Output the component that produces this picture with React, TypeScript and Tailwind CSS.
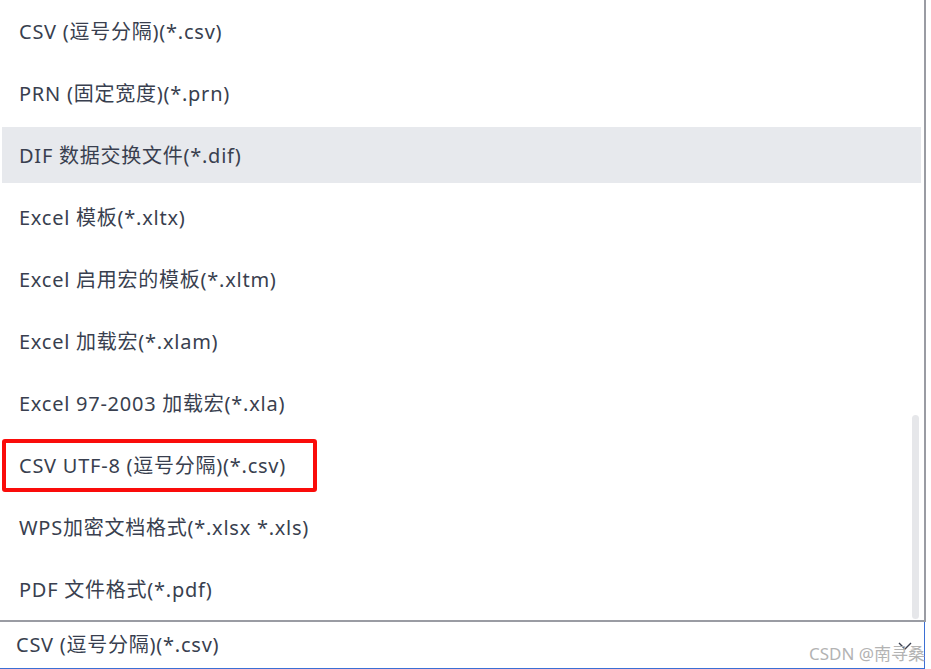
import React from 'react';

const formats = [
  'CSV (逗号分隔)(*.csv)',
  'PRN (固定宽度)(*.prn)',
  'DIF 数据交换文件(*.dif)',
  'Excel 模板(*.xltx)',
  'Excel 启用宏的模板(*.xltm)',
  'Excel 加载宏(*.xlam)',
  'Excel 97-2003 加载宏(*.xla)',
  'CSV UTF-8 (逗号分隔)(*.csv)',
  'WPS加密文档格式(*.xlsx *.xls)',
  'PDF 文件格式(*.pdf)',
];

const font = {
  fontFamily: '"Noto Sans", "Noto Sans CJK SC", sans-serif',
};

export default function App() {
  const hovered = 2;
  const marked = 7;

  return (
    <div className="relative w-[931px] h-[669px] bg-white overflow-hidden text-[#393f4f]" style={font}>
      {/* dropdown list */}
      <div className="relative w-[926px] h-[622px] border-r-[2px] border-b-[2px] border-[#9a9ca3] pt-[3px] pl-[2px] pr-[3px]">
        <ul className="flex flex-col gap-[6px]">
          {formats.map((f, i) => (
            <li
              key={f}
              className={`h-[56px] flex items-center pl-[17px] pt-[1px] text-[20px] tracking-[0.75px] ${
                i === hovered ? 'bg-[#e7e9ed]' : ''
              }`}
            >
              <span
                className={
                  i === marked
                    ? '-ml-[17px] -mt-[1px] pl-[13px] pt-[1px] h-[53px] w-[315px] flex items-center border-[4px] border-[#fa0c0a] rounded-[3px]'
                    : ''
                }
              >
                {f}
              </span>
            </li>
          ))}
        </ul>
        {/* scrollbar thumb */}
        <div className="absolute left-[912px] top-[415px] w-[7px] h-[204px] rounded-full bg-[#e6e7ea]" />
      </div>

      {/* select box */}
      <div className="w-[925px] h-[47px] border-r border-b border-[#3b6fd4] flex items-center justify-between pl-[16px] pr-[12px]">
        <span className="text-[20px] tracking-[0.75px]">CSV (逗号分隔)(*.csv)</span>
        <svg width="14" height="10" viewBox="0 0 14 10" className="mt-[2px]">
          <path d="M1 2 L7 8 L13 2" fill="none" stroke="#393f4f" strokeWidth="1.4" />
        </svg>
      </div>

      {/* watermark */}
      <div className="absolute left-[809px] top-[641px] text-[17px] text-[#b3b3b3] whitespace-nowrap">
        CSDN @南寻桑
      </div>
    </div>
  );
}
